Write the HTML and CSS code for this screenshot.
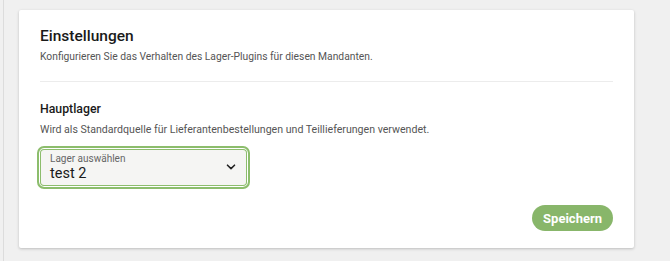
FILE: index.html
```html
<!DOCTYPE html>
<html lang="de">
<head>
  <meta charset="UTF-8" />
  <title>Einstellungen</title>
  <link rel="stylesheet" href="styles.css">
</head>
<body>
  <div class="page">
    <div class="card">
      <h2>Einstellungen</h2>
      <p class="sub">Konfigurieren Sie das Verhalten des Lager-Plugins für diesen Mandanten.</p>
      <hr class="divider">

      <h3>Hauptlager</h3>
      <p class="sub desc">Wird als Standardquelle für Lieferantenbestellungen und Teillieferungen verwendet.</p>

      <div class="select-field">
        <div class="select-text">
          <span class="select-label">Lager auswählen</span>
          <span class="select-value">test 2</span>
        </div>
        <svg class="chevron" width="10" height="6" viewBox="0 0 10 6">
          <path d="M1.5 1.2 L5 4.6 L8.5 1.2" fill="none" stroke="#222" stroke-width="1.6" stroke-linecap="round" stroke-linejoin="round"/>
        </svg>
      </div>

      <div class="actions">
        <button class="save-btn">Speichern</button>
      </div>
    </div>
  </div>
</body>
</html>
```

FILE: styles.css
```css
* {
  box-sizing: border-box;
  margin: 0;
  padding: 0;
}
body {
  font-family: Roboto, 'Liberation Sans', sans-serif;
  background: #f0f0f0;
  width: 670px;
  height: 261px;
  overflow: hidden;
  color: #1d1d1d;
}
.page {
  height: 261px;
  border-left: 1px solid #dcdcdc;
  margin-left: 3px;
  padding: 10px 36px 0 15px;
}
.card {
  background: white;
  box-shadow: 0 1px 3px rgba(0, 0, 0, 0.22);
  border-radius: 2px;
  padding: 15px 21px 14px 21px;
  height: 238px;
}
h2 {
  font-size: 15.5px;
  font-weight: 500;
  color: #1a1a1a;
  line-height: 22px;
}
.sub {
  font-size: 10.3px;
  color: #555;
  line-height: 14px;
  margin-top: 3px;
}
.sub.desc {
  font-size: 10.6px;
  margin-top: 5px;
}
.divider {
  border: none;
  border-top: 1px solid #ececec;
  margin: 17px 0 18px;
}
h3 {
  font-size: 12.3px;
  font-weight: 500;
  color: #1a1a1a;
  line-height: 18px;
}
.select-field {
  margin-top: 9px;
  margin-left: -3px;
  width: 213px;
  height: 43px;
  border: 2px solid #8cbd6c;
  border-radius: 7px;
  background: #f5f5f3;
  box-shadow: inset 0 0 0 1px white, inset 0 0 0 2px #8cbd6c;
  display: flex;
  align-items: center;
  justify-content: space-between;
  padding: 0 12px 0 11px;
}
.select-text {
  display: flex;
  flex-direction: column;
}
.select-label {
  font-size: 10px;
  color: #666;
  line-height: 12px;
}
.select-value {
  font-size: 14.5px;
  color: #1a1a1a;
  line-height: 17px;
}
.chevron {
  margin-top: -2px;
}
.actions {
  display: flex;
  justify-content: flex-end;
  margin-top: 16px;
}
.save-btn {
  font-family: Roboto, 'Liberation Sans', sans-serif;
  background: #88b66a;
  color: white;
  border: none;
  border-radius: 14px;
  font-size: 13px;
  font-weight: 700;
  padding: 0 11px;
  height: 26px;
}
```
